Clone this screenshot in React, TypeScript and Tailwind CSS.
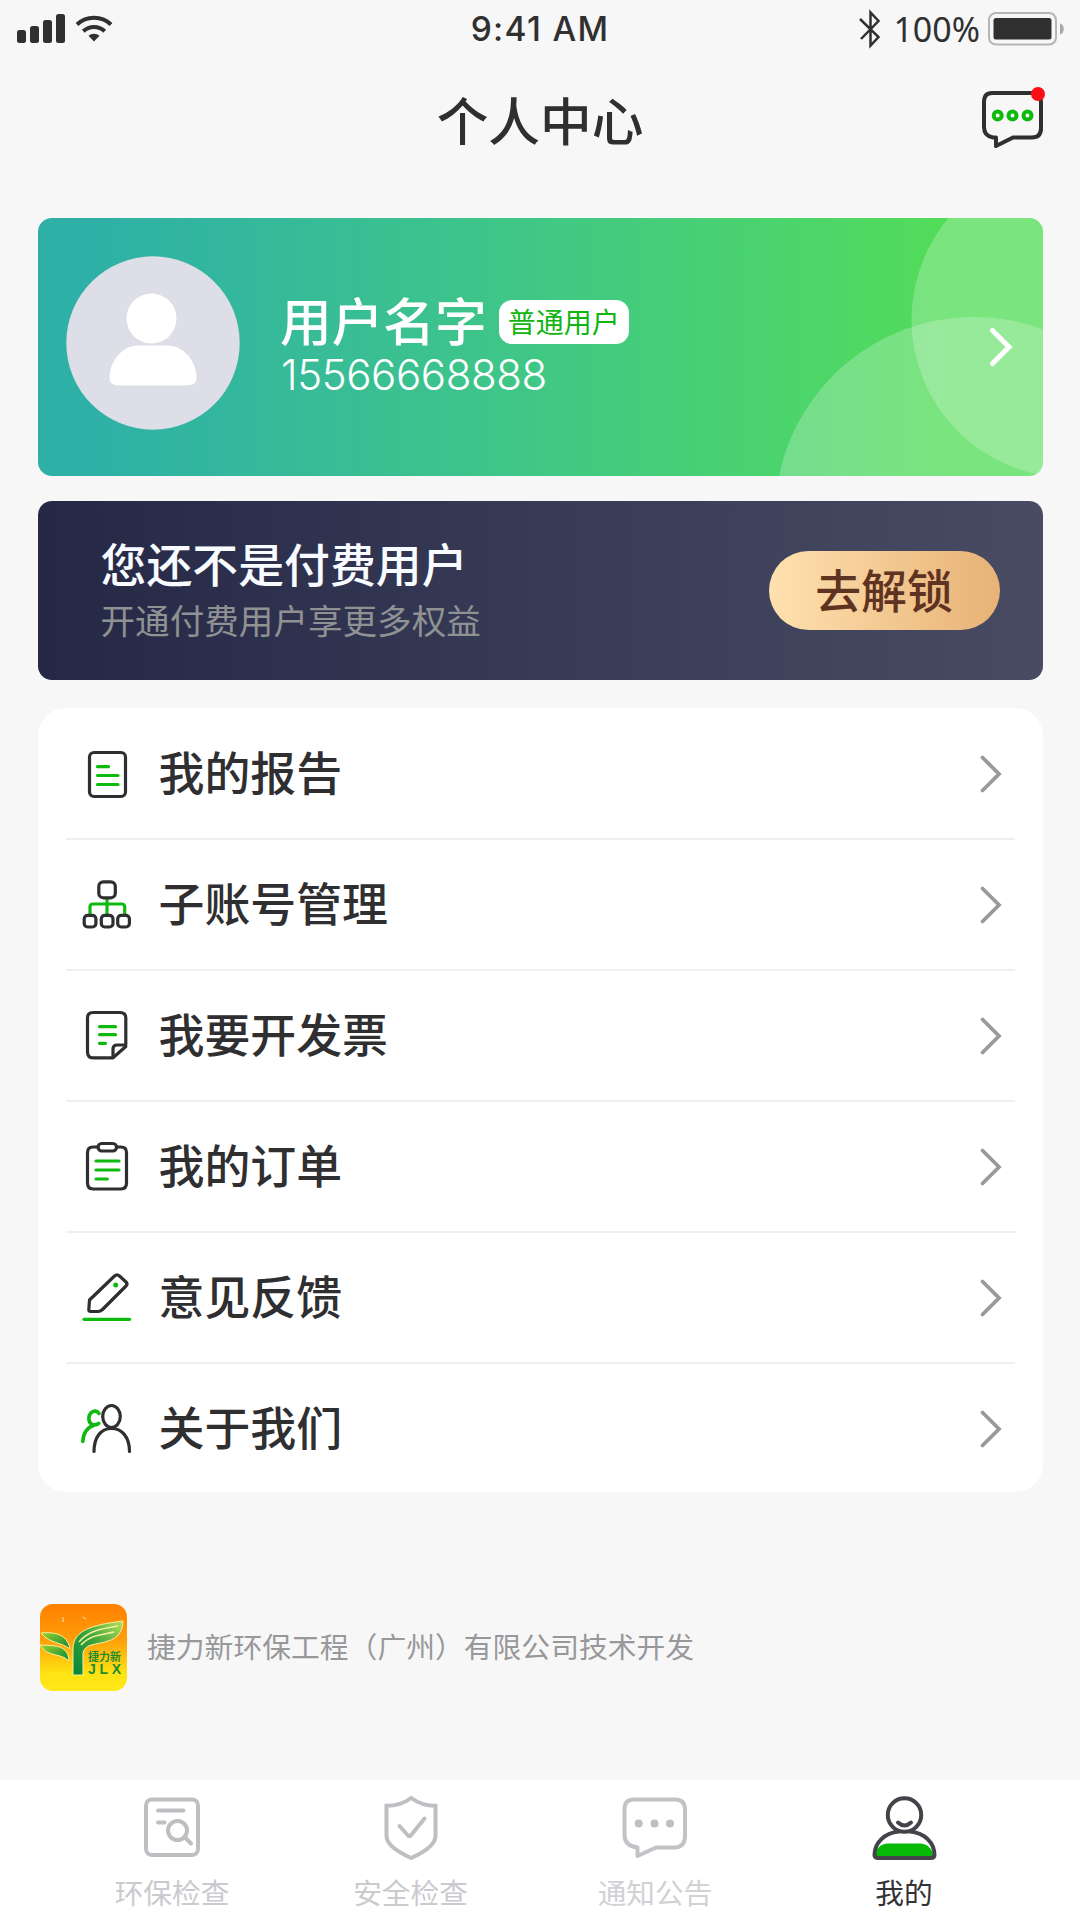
import React from 'react';

type IconProps = { className?: string };

const INK = '#2f2f32';
const GREEN = '#0fba0f';

const SignalIcon: React.FC = () => (
  <svg width="48" height="30" viewBox="0 0 48 30" fill="#303030">
    <rect x="0" y="16" width="9" height="13" rx="2.5" />
    <rect x="13" y="12" width="9" height="17" rx="2.5" />
    <rect x="26" y="6" width="9" height="23" rx="2.5" />
    <rect x="39" y="0" width="9" height="29" rx="2.5" />
  </svg>
);

const WifiIcon: React.FC = () => (
  <svg width="38" height="28" viewBox="0 0 38 28" fill="none" stroke="#303030">
    <path d="M2 9.5C11.5 0.5 26.5 0.5 36 9.5" strokeWidth="4" />
    <path d="M8.3 16.3C14.3 10.6 23.7 10.6 29.7 16.3" strokeWidth="4" />
    <path d="M13.5 20.8C16.5 17.9 21.5 17.9 24.5 20.8L19 26.5Z" fill="#303030" stroke="none" />
  </svg>
);

const BluetoothIcon: React.FC = () => (
  <svg width="22" height="40" viewBox="0 0 22 40" fill="none" stroke="#303030" strokeWidth="2.5">
    <path d="M1 10L19.5 28L11.5 36.5V3.5L19.5 12L2 30" />
  </svg>
);

const BatteryIcon: React.FC = () => (
  <svg width="77" height="34" viewBox="0 0 77 34">
    <rect x="1" y="1" width="67" height="31.5" rx="7" fill="none" stroke="#b5b5b5" strokeWidth="2" />
    <rect x="5.5" y="6" width="58" height="21.5" rx="2.5" fill="#303030" />
    <path d="M72 11.5C77 12.5 77 21.5 72 22.5Z" fill="#a8a8a8" />
  </svg>
);

const MessageIcon: React.FC = () => (
  <svg width="66" height="60" viewBox="0 0 66 60" fill="none">
    <path
      d="M12 5H53Q61 5 61 14V40Q61 49.5 52 49.5H33L16 58V49.5H13Q4 48 4 39V14Q4 5 12 5Z"
      stroke={INK}
      strokeWidth="4"
      strokeLinejoin="round"
    />
    <g stroke={GREEN} strokeWidth="4">
      <circle cx="17.7" cy="27.5" r="4" />
      <circle cx="32.5" cy="27.5" r="4" />
      <circle cx="47.5" cy="27.5" r="4" />
    </g>
  </svg>
);

const ReportIcon: React.FC = () => (
  <svg width="52" height="52" viewBox="0 0 52 52" fill="none" strokeWidth="3.2" strokeLinecap="round">
    <rect x="8.5" y="4.5" width="36" height="44" rx="4.5" stroke={INK} />
    <path d="M16.5 18.7H27.5M16.5 27.5H37M16.5 36.5H37" stroke={GREEN} />
  </svg>
);

const AccountsIcon: React.FC = () => (
  <svg width="52" height="52" viewBox="0 0 52 52" fill="none" strokeWidth="3.2">
    <path d="M9 36V28Q9 25 12 25H40.7Q43.7 25 43.7 28V36M26 19V36" stroke={GREEN} />
    <g stroke={INK}>
      <rect x="17.8" y="2.8" width="16.5" height="16" rx="4.5" />
      <rect x="3.2" y="36.3" width="11.7" height="11.7" rx="3.5" />
      <rect x="20.3" y="36.3" width="11.7" height="11.7" rx="3.5" />
      <rect x="36.7" y="36.3" width="11.7" height="11.7" rx="3.5" />
    </g>
  </svg>
);

const InvoiceIcon: React.FC = () => (
  <svg width="52" height="52" viewBox="0 0 52 52" fill="none" strokeWidth="3.2" strokeLinecap="round" strokeLinejoin="round">
    <path d="M44.8 34.5V8Q44.8 2.5 39 2.5H12Q6.5 2.5 6.5 8V42Q6.5 47.8 12 47.8H32L44.8 36.5" stroke={INK} />
    <path d="M32 47.5V39Q32 35 36 35H44.5" stroke={INK} />
    <path d="M18.5 16.7H34.5M18.5 24.7H34.5M18.5 33.3H24.5" stroke={GREEN} />
  </svg>
);

const OrderIcon: React.FC = () => (
  <svg width="52" height="52" viewBox="0 0 52 52" fill="none" strokeWidth="3.2" strokeLinecap="round">
    <path d="M17 6H12Q6.5 6 6.5 11.5V42Q6.5 48 12 48H40Q45.5 48 45.5 42V11.5Q45.5 6 40 6H35.5" stroke={INK} />
    <rect x="17" y="2.5" width="18.6" height="7.5" rx="3.7" stroke={INK} />
    <path d="M15 20H38M15 29H38M15 38H26.3" stroke={GREEN} />
  </svg>
);

const FeedbackIcon: React.FC = () => (
  <svg width="52" height="52" viewBox="0 0 52 52" fill="none" strokeWidth="3.2" strokeLinecap="round" strokeLinejoin="round">
    <path
      d="M8.5 28L33.5 4Q36 1.7 38.5 4L45 10Q47 12 45 14L21.5 37.5Q19.5 39.5 17 39.5H9.5Q7.7 39.5 7.8 37.5Z"
      stroke={INK}
    />
    <circle cx="34.7" cy="13" r="2.5" fill={GREEN} />
    <path d="M3 47.3H48.5" stroke={GREEN} />
  </svg>
);

const AboutIcon: React.FC = () => (
  <svg width="52" height="52" viewBox="0 0 52 52" fill="none" strokeWidth="3.2" strokeLinecap="round">
    <path
      d="M18 10.5C16.5 7.8 12.5 7 9.8 10C6.8 13.5 7.3 19.5 11 21.3C13.5 22.3 16 21.8 17.7 20.3M12.5 22.5C6.5 24 2 30.5 1.8 38.5"
      stroke={GREEN}
      strokeWidth="3.6"
    />
    <ellipse cx="30.5" cy="13.5" rx="8.8" ry="11" stroke={INK} />
    <path d="M13 48.5C13 33.5 20.5 25.5 30.5 25.5S48.5 33.5 48.5 48.5" stroke={INK} />
  </svg>
);

const ChevronIcon: React.FC<IconProps> = ({ className }) => (
  <svg className={className} width="24" height="42" viewBox="0 0 24 42" fill="none" stroke="currentColor" strokeLinecap="round">
    <path d="M3.5 4.5L20 21L3.5 37.5" />
  </svg>
);

const AvatarIcon: React.FC = () => (
  <svg className="shrink-0" width="174" height="174" viewBox="0 0 174 174">
    <circle cx="87" cy="87" r="86.7" fill="#dddee7" />
    <circle cx="85.5" cy="62.5" r="25" fill="#fff" />
    <path d="M43.5 122.5C43.5 104 57 89.5 72 89.5H101C117 89.5 130.5 104 130.5 122.5Q130.500 129.500 120 129.500H54Q43.500 129.500 43.500 122.500Z" fill="#fff" />
  </svg>
);

const InspectTabIcon: React.FC = () => (
  <svg width="68" height="68" viewBox="0 0 68 68" fill="none" stroke="#bfbec2" strokeWidth="4" strokeLinecap="round">
    <rect x="8" y="6.5" width="52" height="55.5" rx="6" />
    <path d="M20 17.5H45.5M20 29.5H26.5M47 44.5L53 50.5" />
    <circle cx="39.5" cy="37.5" r="9.5" />
  </svg>
);

const SafetyTabIcon: React.FC = () => (
  <svg width="68" height="68" viewBox="0 0 68 68" fill="none" stroke="#bfbec2" strokeWidth="4" strokeLinecap="round">
    <path d="M34.2 5C27.5 10 18 12.8 9.5 12.8V43Q9.5 54 34.2 65Q58.5 54 58.5 43V12.8C50 12.8 41 10 34.2 5Z" />
    <path d="M22.5 33L31 42.5Q32.5 44 34 42.3L47.5 25.5" />
  </svg>
);

const NoticeTabIcon: React.FC = () => (
  <svg width="68" height="68" viewBox="0 0 68 68" fill="none" stroke="#c3c2c6" strokeWidth="4" strokeLinejoin="round">
    <path d="M12.5 6.5H54Q64 6.5 64 16.5V43Q64 54.5 53 54.5H35L16.5 63V54.5Q3.5 53 3.5 42V16.5Q3.5 6.5 12.5 6.5Z" />
    <g fill="#bfbec2" stroke="none">
      <circle cx="17.7" cy="30.5" r="4" />
      <circle cx="33.5" cy="30.5" r="4" />
      <circle cx="49" cy="30.5" r="4" />
    </g>
  </svg>
);

const MineTabIcon: React.FC = () => (
  <svg width="68" height="68" viewBox="0 0 68 68" fill="none" stroke="#434349" strokeWidth="4" strokeLinecap="round">
    <path d="M5 63C5 56 11 50.5 18 50.5H50C57 50.5 63 56 63 63Z" fill="#06b906" stroke="none" />
    <circle cx="34.5" cy="22" r="16.7" />
    <path d="M28 29.5Q34.5 35.5 41 29.5" />
    <path d="M29 38.5C14 40 4.5 50 4.5 62Q4.5 65 8.5 65H60.5Q64.5 65 64.5 62C64.5 50 55 40 40 38.5" />
  </svg>
);

const CompanyLogo: React.FC = () => (
  <svg className="shrink-0" width="87" height="87" viewBox="0 0 87 87">
    <defs>
      <linearGradient id="sky" x1="0" y1="0" x2="0" y2="1">
        <stop offset="0" stopColor="#ff8000" />
        <stop offset="0.4" stopColor="#ff9d0a" />
        <stop offset="0.8" stopColor="#ffe312" />
        <stop offset="1" stopColor="#ffe81a" />
      </linearGradient>
      <linearGradient id="leaf" x1="0" y1="0" x2="1" y2="1">
        <stop offset="0" stopColor="#9bd42c" />
        <stop offset="1" stopColor="#078338" />
      </linearGradient>
      <linearGradient id="stem" x1="0" y1="1" x2="1" y2="0">
        <stop offset="0" stopColor="#058438" />
        <stop offset="0.5" stopColor="#35a23a" />
        <stop offset="1" stopColor="#b8df5a" />
      </linearGradient>
    </defs>
    <rect width="87" height="87" rx="13" fill="url(#sky)" />
    <g stroke="#f3f0a0" strokeWidth="1">
      <path d="M1 29C13 28 27 29 30 45C22 38 10 40 1 29Z" fill="url(#leaf)" />
      <path d="M0 41C14 42 28 40 29 57C20 48 8 54 0 41Z" fill="url(#leaf)" />
      <path d="M33 71V44C34 26 52 21 83 17C83 27 78 34 68 37C57 41 45 39 43 49V71Z" fill="url(#stem)" />
    </g>
    <path d="M39 38C48 27 60 25 78 22M41 41C50 31 60 31 74 28" fill="none" stroke="#f3f0a0" strokeWidth="1.5" />
    <g fill="#1d8d32" fontWeight="700">
      <text x="48" y="57" fontSize="11" textLength="33" fontFamily="'Noto Sans CJK SC', sans-serif">捷力新</text>
      <text x="48" y="70" fontSize="14" textLength="33" fontFamily="'Liberation Sans', sans-serif">JLX</text>
    </g>
    <path d="M23 13V18M43 13L46 15" stroke="#ffc67a" strokeWidth="1.5" />
  </svg>
);

const menu = [
  { label: '我的报告', Icon: ReportIcon },
  { label: '子账号管理', Icon: AccountsIcon },
  { label: '我要开发票', Icon: InvoiceIcon },
  { label: '我的订单', Icon: OrderIcon },
  { label: '意见反馈', Icon: FeedbackIcon },
  { label: '关于我们', Icon: AboutIcon },
];

const tabs = [
  { label: '环保检查', Icon: InspectTabIcon, color: 'text-[#cbcace]' },
  { label: '安全检查', Icon: SafetyTabIcon, color: 'text-[#cbcace]' },
  { label: '通知公告', Icon: NoticeTabIcon, color: 'text-[#d2d1d5]' },
  { label: '我的', Icon: MineTabIcon, color: 'text-[#333336]' },
];

const StatusBar: React.FC = () => (
  <div className="grid h-[58px] grid-cols-3 items-center pr-[15px] pl-[17px] font-['Inter',sans-serif] text-[#303030]">
    <div className="flex items-center gap-[10px]">
      <SignalIcon />
      <WifiIcon />
    </div>
    <div className="pt-[2px] pr-[2px] text-center text-[33.5px] leading-none font-medium tracking-[1.3px]">9:41 AM</div>
    <div className="flex items-center justify-end">
      <BluetoothIcon />
      <span className="mr-[8px] ml-[12px] font-['Noto_Sans',sans-serif] text-[34px] leading-none">100%</span>
      <BatteryIcon />
    </div>
  </div>
);

const ProfileCard: React.FC = () => (
  <section className="relative mt-[33.5px] flex h-[258.5px] items-center overflow-hidden rounded-[14px] bg-linear-to-r from-[#2fb0a6] from-6% to-[#53dc58] to-90% pl-[28.5px] text-white">
    <svg className="absolute top-0 right-0" width="270" height="259" viewBox="0 0 270 259" fill="#fff" fillOpacity="0.23">
      <circle cx="296.5" cy="101.5" r="158" />
      <circle cx="201" cy="298" r="199" />
    </svg>
    <div className="relative -mt-[7px]">
      <AvatarIcon />
    </div>
    <div className="relative ml-[40px] flex-1 pb-[4px]">
      <div className="flex items-center">
        <h2 className="text-[51.7px] leading-none font-medium">用户名字</h2>
        <span className="mt-[5px] ml-[12px] flex h-[44px] w-[130px] items-center justify-center rounded-[13px] bg-white pb-[2px] text-[28px] leading-none text-[#12b512]">
          普通用户
        </span>
      </div>
      <p className="mt-[9px] pl-px font-['Inter',sans-serif] text-[42px] leading-none font-light tracking-[-0.4px]">15566668888</p>
    </div>
    <ChevronIcon className="relative mt-px mr-[30px] stroke-[5]" />
  </section>
);

const UnlockCard: React.FC = () => (
  <section className="mt-[25px] flex h-[179px] items-center justify-between rounded-[14px] bg-linear-to-r from-[#242845] via-[#373b56] to-[#484b62] pr-[43px] pl-[63px]">
    <div className="pb-[4px]">
      <h3 className="text-[45.9px] leading-none font-medium text-[#f8fbff]">您还不是付费用户</h3>
      <p className="mt-[16px] text-[34.6px] leading-none text-[#8f9193]">开通付费用户享更多权益</p>
    </div>
    <button className="flex h-[79px] w-[231px] items-center justify-center rounded-full bg-linear-to-r from-[#ffe1af] to-[#e7b276] pb-[4px] text-[45.9px] leading-none font-medium text-[#5f3321]">
      去解锁
    </button>
  </section>
);

export default function App() {
  return (
    <div className="flex h-[1920px] w-[1080px] flex-col overflow-hidden bg-[#f7f7f8] font-['Noto_Sans_CJK_SC',sans-serif] text-[#2f2f32]">
      <StatusBar />
      <header className="grid h-[126px] grid-cols-[1fr_auto_1fr] items-center pr-[34px]">
        <h1 className="col-start-2 pb-[5px] pl-[34px] text-[51.7px] leading-none font-medium">个人中心</h1>
        <div className="relative justify-self-end pb-[7px]">
          <MessageIcon />
          <span className="absolute -top-px right-px size-[14px] rounded-full bg-[#fb0f14]" />
        </div>
      </header>

      <main className="flex-1 pr-[37.5px] pl-[37.5px]">
        <ProfileCard />
        <UnlockCard />

        <ul className="mt-[28px] h-[784px] rounded-[28px] bg-white pt-px pr-[28px] pl-[28px]">
          {menu.map(({ label, Icon }) => (
            <li key={label} className="flex h-[131px] items-center border-b-2 border-[#efeff2] pr-[12px] pl-[15px] last:border-b-0 last:pb-[2px]">
              <Icon />
              <span className="ml-[26px] flex-1 pb-[6px] text-[45.9px] leading-none font-medium">{label}</span>
              <ChevronIcon className="stroke-[3.8] text-[#99999c]" />
            </li>
          ))}
        </ul>

        <div className="mt-[112px] flex items-center pl-[2.5px]">
          <CompanyLogo />
          <p className="ml-[20px] pb-[2px] text-[28.8px] leading-none text-[#98989b]">捷力新环保工程（广州）有限公司技术开发</p>
        </div>
      </main>

      <nav className="grid h-[140px] grid-cols-[238px_239px_250px_248px] bg-white pl-[53px]">
        {tabs.map(({ label, Icon, color }) => (
          <div key={label} className={`flex flex-col items-center pt-[13px] ${color}`}>
            <Icon />
            <span className="mt-[17px] text-[28.7px] leading-none">{label}</span>
          </div>
        ))}
      </nav>
    </div>
  );
}
